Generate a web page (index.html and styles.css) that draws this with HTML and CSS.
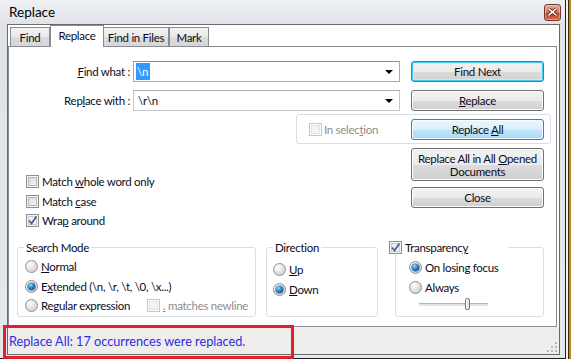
FILE: index.html
```html
<!DOCTYPE html>
<html>
<head>
	<title>Replace</title>
	<link rel="stylesheet" href="styles.css">
</head>
<body>
<div class="window">
	<div class="titlebar">
		<span class="title">Replace</span>
		<div class="close-btn">
			<svg width="9" height="8" viewBox="0 0 9 8"><path d="M1 1 L8 7 M8 1 L1 7" stroke="#5a1a10" stroke-width="3.2" stroke-linecap="square"/><path d="M1 1 L8 7 M8 1 L1 7" stroke="#fff" stroke-width="1.6" stroke-linecap="square"/></svg>
		</div>
	</div>
	<div class="client">
		<div class="tabs">
			<div class="tab tab-find">Find</div>
			<div class="tab tab-active">Replace</div>
			<div class="tab tab-files">Find in Files</div>
			<div class="tab tab-mark">Mark</div>
		</div>
		<div class="panel">
			<div class="row row-find">
				<label class="lbl"><u>F</u>ind what :</label>
				<div class="combo combo-focus"><span class="sel">\n</span><span class="arrow"></span></div>
				<div class="btn btn-focus"><span>Find Next</span></div>
			</div>
			<div class="row">
				<label class="lbl">Rep<u>l</u>ace with :</label>
				<div class="combo"><span class="val">\r\n</span><span class="arrow"></span></div>
				<div class="btn"><span><u>R</u>eplace</span></div>
			</div>
			<div class="selbox">
				<span class="cb cb-off"></span>
				<span class="off-text">In selec<u>t</u>ion</span>
				<div class="btn btn-hot"><span>Replace <u>A</u>ll</span></div>
			</div>
			<div class="mid">
				<div class="opts">
					<div class="line"><span class="cb"></span><span class="txt">Match <u>w</u>hole word only</span></div>
					<div class="line"><span class="cb"></span><span class="txt">Match <u>c</u>ase</span></div>
					<div class="line line-short"><span class="cb cb-on"><svg width="11" height="11" viewBox="0 0 11 11"><path d="M2 5.5 L4.6 8.6 L9.4 1.6" fill="none" stroke="#4b5f99" stroke-width="1.8"/></svg></span><span class="txt">Wra<u>p</u> around</span></div>
				</div>
				<div class="side">
					<div class="btn btn-tall"><span>Replace All in All <u>O</u>pened<br>Documents</span></div>
					<div class="btn btn-close"><span>Close</span></div>
				</div>
			</div>
			<div class="groups">
				<div class="group group-mode">
					<div class="gtitle">Search Mode</div>
					<div class="rlist">
						<div class="line"><span class="rb"></span><span class="txt"><u>N</u>ormal</span></div>
						<div class="line"><span class="rb rb-on"></span><span class="txt">E<u>x</u>tended (\n, \r, \t, \0, \x...)</span></div>
						<div class="line line-short"><span class="rb"></span><span class="txt txt-regex">Re<u>g</u>ular expression</span><span class="cb cb-off"></span><span class="off-text"><u>.</u> matches newline</span></div>
					</div>
				</div>
				<div class="group group-dir">
					<div class="gtitle">Direction</div>
					<div class="rlist">
						<div class="line"><span class="rb"></span><span class="txt"><u>U</u>p</span></div>
						<div class="line"><span class="rb rb-on"></span><span class="txt"><u>D</u>own</span></div>
					</div>
				</div>
				<div class="group group-trans">
					<div class="gtitle gtitle-check"><span class="cb cb-on"><svg width="11" height="11" viewBox="0 0 11 11"><path d="M2 5.5 L4.6 8.6 L9.4 1.6" fill="none" stroke="#4b5f99" stroke-width="1.8"/></svg></span><span class="txt">Transparenc<u>y</u></span></div>
					<div class="rlist">
						<div class="line"><span class="rb rb-on"></span><span class="txt">On losing focus</span></div>
						<div class="line"><span class="rb"></span><span class="txt">Always</span></div>
						<div class="slider"><span class="thumb"></span></div>
					</div>
				</div>
			</div>
		</div>
		<div class="status">
			<span class="status-text">Replace All: 17 occurrences were replaced.</span>
			<svg class="grip" width="11" height="11" viewBox="0 0 11 11">
				<rect x="9" y="1" width="2" height="2" fill="#b9b9b9"/>
				<rect x="5" y="5" width="2" height="2" fill="#b9b9b9"/>
				<rect x="9" y="5" width="2" height="2" fill="#b9b9b9"/>
				<rect x="1" y="9" width="2" height="2" fill="#b9b9b9"/>
				<rect x="5" y="9" width="2" height="2" fill="#b9b9b9"/>
				<rect x="9" y="9" width="2" height="2" fill="#b9b9b9"/>
			</svg>
		</div>
	</div>
	<div class="annot"></div>
</div>
</body>
</html>
```

FILE: styles.css
```css
	html, body {margin: 0; padding: 0; background: #fff;}
	body {font-family: Lato, "Liberation Sans", sans-serif; font-size: 11.5px; letter-spacing: -0.3px; color: #0c0c20;}
	u {text-decoration: underline; text-underline-offset: 1px;}

	.window {position: relative; width: 566px; height: 359px; box-sizing: border-box; display: flex; flex-direction: column; background: linear-gradient(#eef0f3, #dfe3e8 24px, #e4e7eb); border-right: 1px solid #1e1e1e; border-bottom: 1px solid #1e1e1e; box-shadow: 0 0 0 2px #f2f2f2, 0 0 0 3px #3a2a08, 0 0 0 6px #b48a26;}

	.titlebar {height: 24px; display: flex; align-items: center; padding-left: 9px;}
	.title {font-size: 13.5px; letter-spacing: 0; color: #000; margin-top: -1px;}
	.close-btn {margin-left: auto; margin-right: 4px; width: 17px; height: 17px; box-sizing: border-box; display: flex; align-items: center; justify-content: center; border: 1px solid #6e3a30; border-radius: 3px; background: linear-gradient(#e8a995, #d5735d 50%, #c2391f 51%, #d26f4c); box-shadow: inset 0 0 0 1px rgba(255,255,255,0.35);}

	.client {flex: 1; margin: 0 5px 3px 7px; border: 1px solid #6a6a6a; background: #fff; display: flex; flex-direction: column;}

	.tabs {height: 21px; display: flex; align-items: flex-end; padding-left: 2px;}
	.tab {height: 19px; box-sizing: border-box; border: 1px solid #898c95; border-bottom: none; display: flex; align-items: center; justify-content: center; white-space: nowrap; background: linear-gradient(#f3f3f3, #e9e9e9 50%, #dcdcdc 51%, #d6d6d6);}
	.tab-find {width: 40px;}
	.tab-active {width: 54px; height: 22px; margin-bottom: -1px; background: #fff; position: relative; align-items: flex-start; padding-top: 3px;}
	.tab-files {width: 65px; border-left: none;}
	.tab-mark {width: 40px;}

	.panel {height: 281px; box-sizing: border-box; margin-right: 2px; border: 1px solid #898c95;}

	.row {display: flex; align-items: center; height: 21px; margin-top: 8px;}
	.row-find {margin-top: 14px;}
	.lbl {width: 124px; box-sizing: border-box; padding-right: 3px; text-align: right;}
	.combo {width: 267px; height: 21px; box-sizing: border-box; margin-right: 11px; padding-left: 2px; display: flex; align-items: center; border: 1px solid #c5c7cc; border-top-color: #abadb3;}
	.combo-focus {border-color: #7eb4ea; border-top-color: #569de5;}
	.sel {background: #3399ff; color: #fff; height: 17px; line-height: 17px; padding: 0 2px 0 1px;}
	.val {padding-left: 2px;}
	.arrow {margin-left: auto; margin-right: 6px; width: 0; height: 0; border-left: 4px solid transparent; border-right: 4px solid transparent; border-top: 4px solid #000;}

	.btn {width: 133px; height: 21px; flex: none; box-sizing: border-box; display: flex; align-items: center; justify-content: center; text-align: center; line-height: 13px; border: 1px solid #707070; border-radius: 3px; background: linear-gradient(#f2f2f2, #ebebeb 50%, #dddddd 51%, #cfcfcf); box-shadow: inset 0 0 0 1px #fcfcfc;}
	.btn-focus {border-color: #3c7fb1; box-shadow: inset 0 0 0 1px #48c8f8, inset 0 0 0 2px #c8ecfb;}
	.btn-hot {border-color: #3c7fb1; background: linear-gradient(#eaf6fd, #d9f0fc 50%, #bee6fd 51%, #a7d9f5); box-shadow: inset 0 0 0 1px #f6fbff; margin-left: auto;}
	.btn-tall {height: 33px; margin-top: 4px;}
	.btn-close {margin-top: 6px;}

	.selbox {margin: 3px 0 0 287px; width: 255px; height: 30px; box-sizing: border-box; display: flex; align-items: center; padding: 0 6px 0 12px; border: 1px solid #d5dfe5; border-radius: 3px;}

	.cb {width: 13px; height: 13px; flex: none; box-sizing: border-box; display: inline-flex; align-items: center; justify-content: center; border: 1px solid #8e8f8f; background: linear-gradient(135deg, #cfd2d6, #f4f4f4 80%); box-shadow: inset 0 0 0 1px #f4f4f4, inset 0 0 0 2px #b6b9bd;}
	.cb-on {background: linear-gradient(135deg, #e2e4e8, #fbfbfb 80%); box-shadow: inset 0 0 0 1px #f4f4f4, inset 0 0 0 2px #c6c9cd;}
	.cb-off {border-color: #c6c6c6; background: #f4f4f4; box-shadow: inset 0 0 0 1px #fff, inset 0 0 0 2px #e2e2e2;}
	.off-text {color: #8d8d8d; margin-left: 2px; white-space: nowrap;}

	.mid {display: flex; height: 88px;}
	.opts {width: 402px; box-sizing: border-box; padding: 27px 0 0 17px;}
	.line {height: 20px; display: flex; align-items: center; white-space: nowrap;}
	.line-short {height: 19px;}
	.line .txt {margin-left: 3px;}

	.groups {display: flex; margin-top: 15px; padding-left: 8px;}
	.group {height: 70px; box-sizing: border-box; border: 1px solid #d5dfe5; border-radius: 3px;}
	.group-mode {width: 239px;}
	.group-dir {width: 112px; margin-left: 10px;}
	.group-trans {width: 149px; margin-left: 17px;}
	.gtitle {width: fit-content; height: 15px; line-height: 15px; margin: -8px 0 0 6px; padding: 0 2px; background: #fff;}
	.gtitle-check {width: 119px; box-sizing: border-box; margin-left: -7px; padding: 0; display: flex; align-items: center;}
	.gtitle-check .txt {margin-left: 3px;}

	.rlist {padding: 1px 0 0 7px;}
	.group-dir .rlist {padding: 4px 0 0 6px;}
	.group-trans .rlist {padding: 2px 0 0 13px;}
	.txt-regex {width: 106px; flex: none;}
	.group-mode .off-text {margin-left: 3px;}

	.rb {width: 13px; height: 13px; flex: none; box-sizing: border-box; border-radius: 50%; display: inline-flex; align-items: center; justify-content: center; border: 1px solid #8e8f8f; background: radial-gradient(circle at 35% 30%, #ffffff, #e4e4e4 45%, #c4c4c4);}
	.rb-on::after {content: ""; width: 7px; height: 7px; border-radius: 50%; background: radial-gradient(circle at 35% 30%, #8fdcff, #2b8fd6 40%, #0d4f8a 80%); box-shadow: 0 0 0 0.5px #1c4a72;}

	.slider {position: relative; width: 69px; height: 2px; margin: 6px 0 0 10px; border-top: 1px solid #b5b5b5; border-bottom: 1px solid #fff; background: #e2e2e2;}
	.thumb {position: absolute; left: 46px; top: -6px; width: 5px; height: 12px; box-sizing: border-box; border: 1px solid #777; border-radius: 2px; background: linear-gradient(90deg, #fafafa, #dedede);}

	.status {flex: 1; display: flex; align-items: center; padding-left: 1px; background: #efedeb; position: relative;}
	.status-text {color: #2c2ce0; font-size: 12.7px; letter-spacing: 0; margin-top: 1px;}
	.grip {position: absolute; right: 2px; bottom: 2px;}

	.annot {position: absolute; left: 3px; top: 325px; width: 291px; height: 34px; box-sizing: border-box; border: 3px solid #e3202a;}
```
